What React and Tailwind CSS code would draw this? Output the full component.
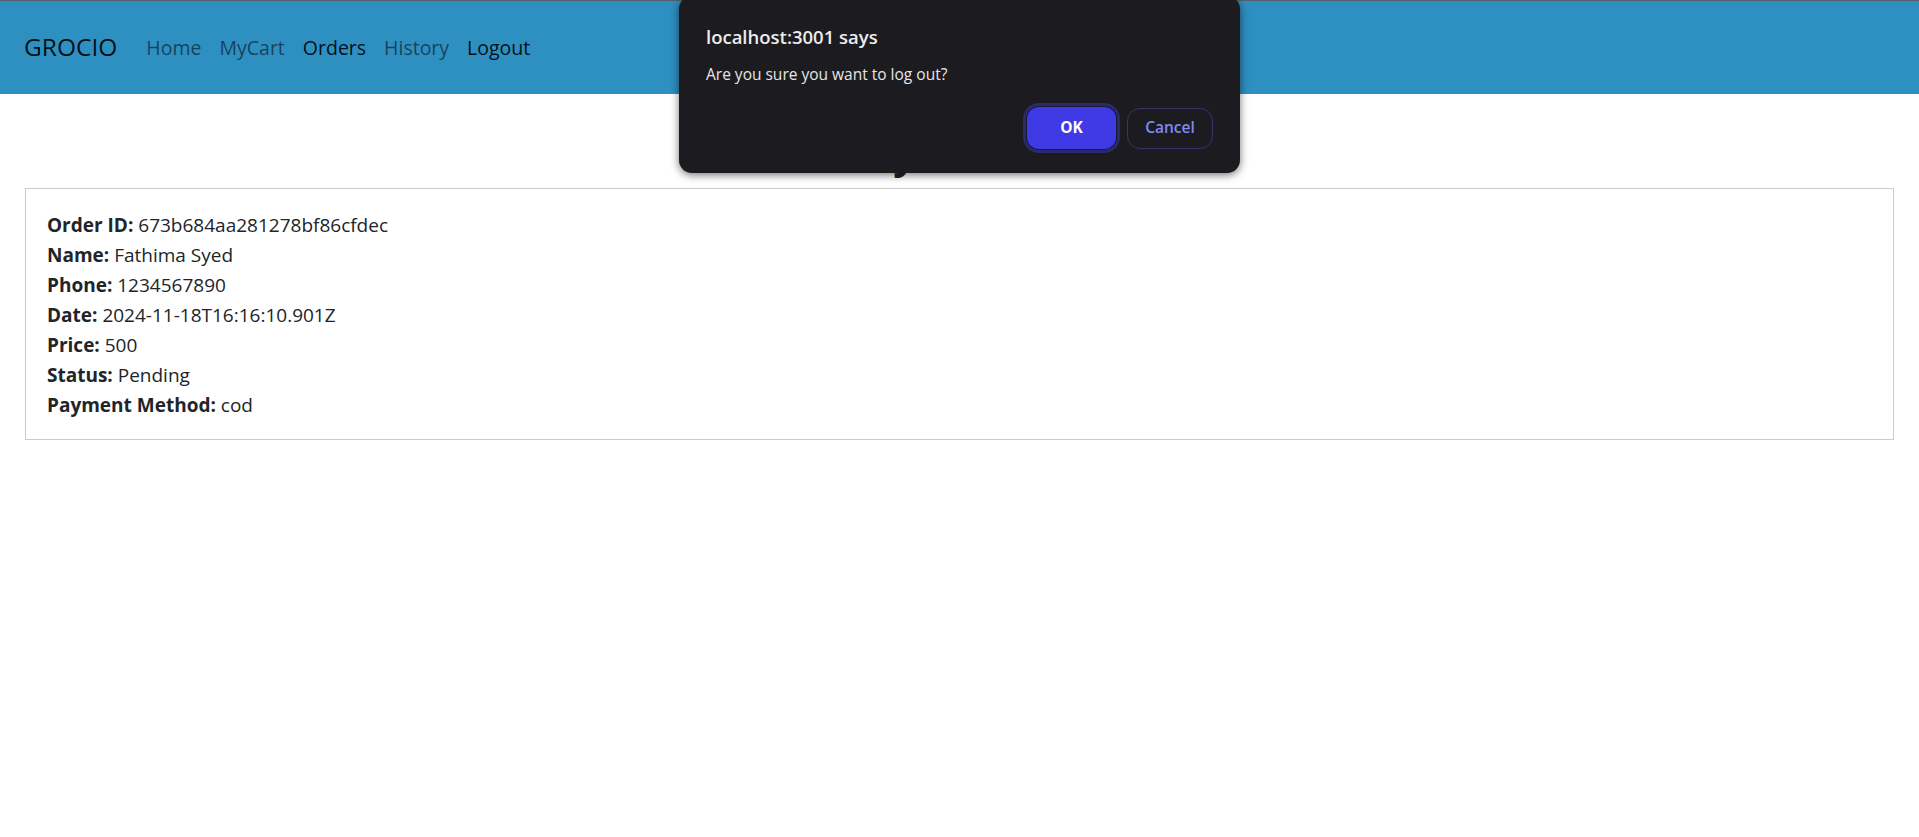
import React from "react";

const order = {
  _id: "673b684aa281278bf86cfdec",
  name: "Fathima Syed",
  phone: "1234567890",
  date: "2024-11-18T16:16:10.901Z",
  price: 500,
  status: "Pending",
  paymentMethod: "cod",
};

function Navbar() {
  const links = [
    { label: "Home", active: false },
    { label: "MyCart", active: false },
    { label: "Orders", active: true },
    { label: "History", active: false },
    { label: "Logout", active: true },
  ];
  return (
    <nav className="bg-[#2e8fc1] border-t border-[#56606a] h-[94px] flex items-center px-[24px]">
      <span className="text-[24.5px] text-black/90 mr-[20px]">GROCIO</span>
      <ul className="flex items-center">
        {links.map((l) => (
          <li key={l.label}>
            <a
              className={
                "px-[9px] text-[19.5px] " +
                (l.active ? "text-black/90" : "text-black/55")
              }
            >
              {l.label}
            </a>
          </li>
        ))}
      </ul>
    </nav>
  );
}

// browser style confirm() box shown over the page
function ConfirmDialog() {
  return (
    <div className="absolute left-[679px] top-[-4px] w-[561px] h-[177px] rounded-[13px] bg-[#1c1b20] shadow-[0_2px_8px_rgba(0,0,0,0.55)] pl-[27px] pr-[27px] pt-[32px]">
      <div className="text-[18.5px] font-semibold text-[#ececec] leading-none">
        localhost:3001 says
      </div>
      <div className="text-[15.5px] text-[#e6e6e6] mt-[20px] leading-none">
        Are you sure you want to log out?
      </div>
      <div className="flex justify-end items-center gap-[7px] mt-[21px]">
        <div className="rounded-[16px] border-[3px] border-[#2a2a70] p-[1px]">
          <button className="block w-[89px] h-[42px] rounded-[12px] bg-[#3f3ae6] text-white text-[15.5px] font-bold">
            OK
          </button>
        </div>
        <button className="w-[86px] h-[41px] rounded-[13px] border border-[#33356b] text-[#8089f2] text-[15.5px] font-semibold">
          Cancel
        </button>
      </div>
    </div>
  );
}

export default function App() {
  const rows = [
    ["Order ID:", order._id],
    ["Name:", order.name],
    ["Phone:", order.phone],
    ["Date:", order.date],
    ["Price:", order.price],
    ["Status:", order.status],
    ["Payment Method:", order.paymentMethod],
  ];

  return (
    <div className="relative min-h-screen bg-white text-[#212529] font-['Open_Sans',sans-serif]">
      <Navbar />
      <main className="px-[25px]">
        <h2 className="text-center text-[40px] font-bold leading-[1.2] mt-[36px] mb-[10px]">
          My Orders
        </h2>
        <div className="border border-[#cccccc] px-[21px] pt-[21px] pb-[19px]">
          {rows.map(([k, v]) => (
            <p key={k} className="text-[19px] leading-[30px]">
              <strong className="font-bold">{k}</strong> {v}
            </p>
          ))}
        </div>
      </main>
      <ConfirmDialog />
    </div>
  );
}
